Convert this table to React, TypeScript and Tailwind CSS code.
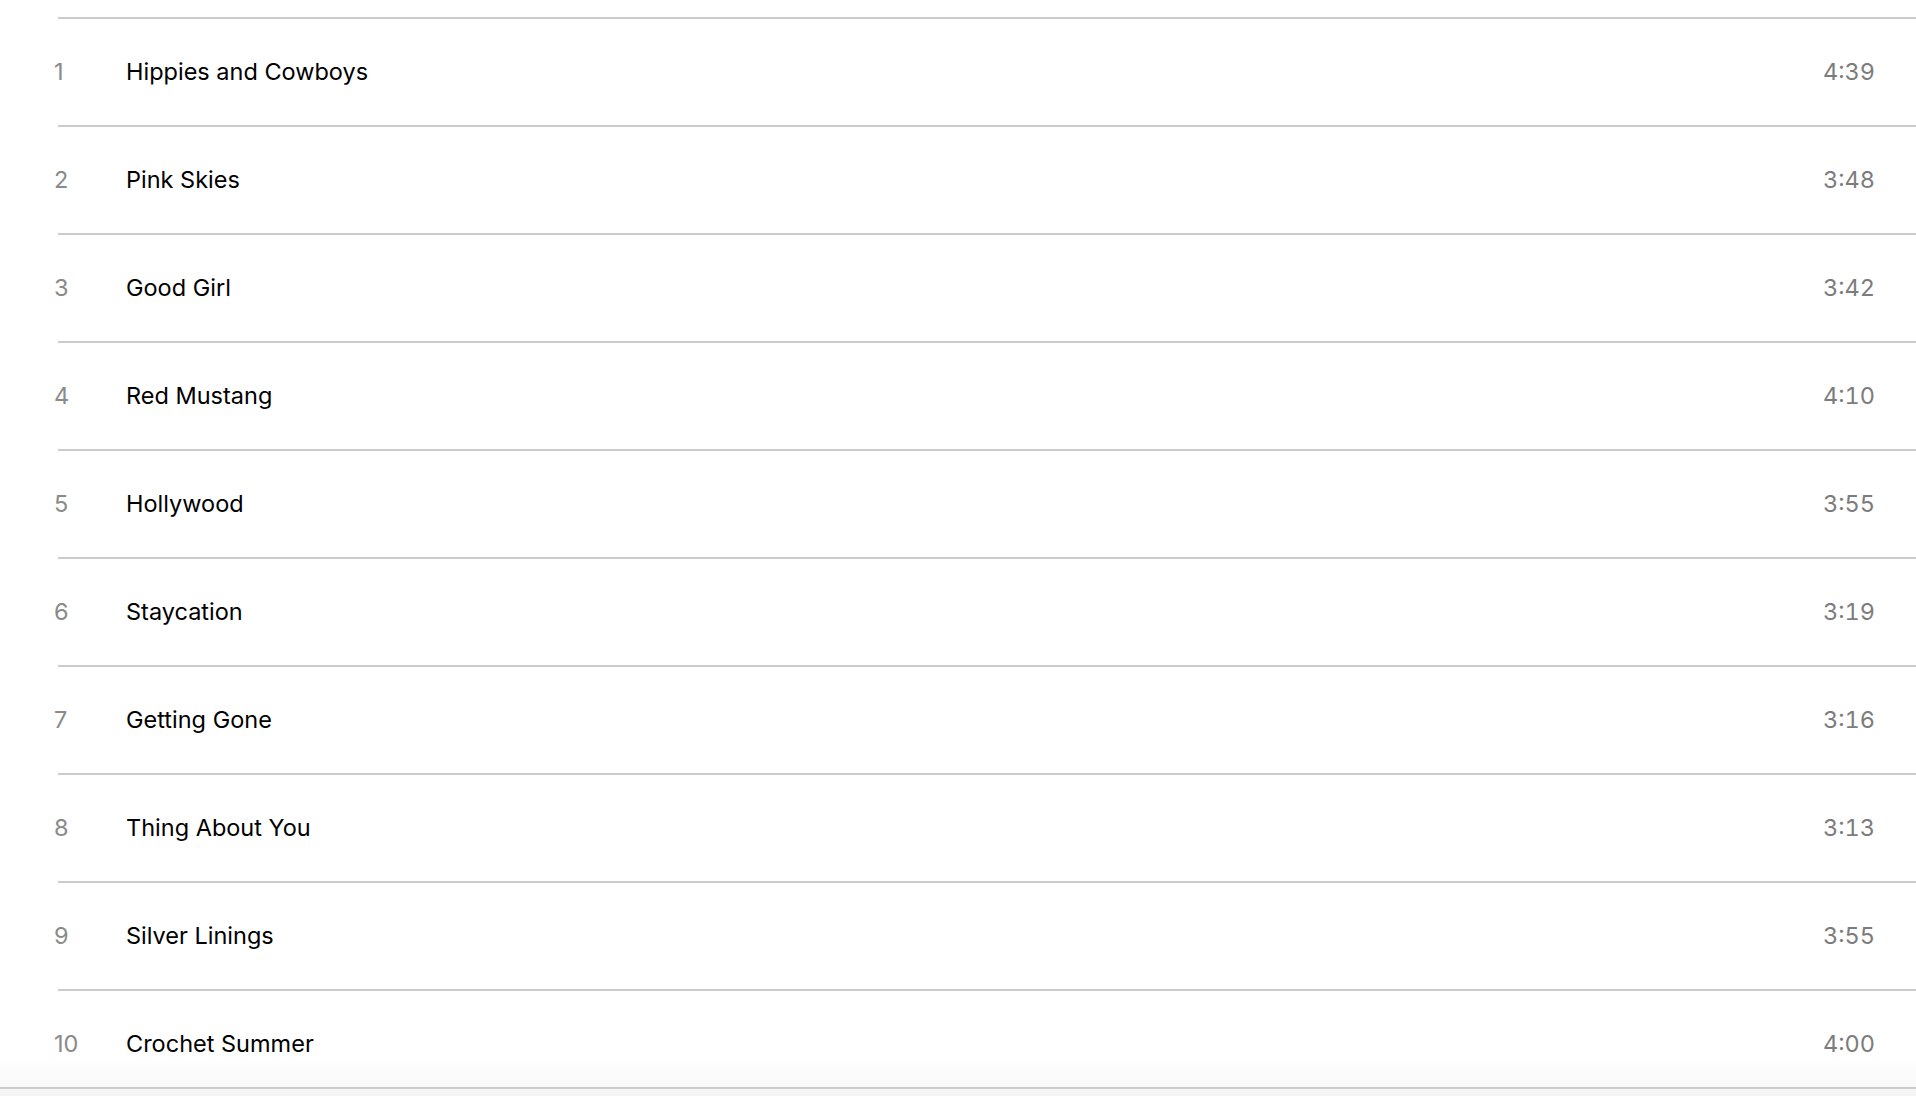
import React from 'react';

const tracks = [
  { n: 1, title: 'Hippies and Cowboys', time: '4:39' },
  { n: 2, title: 'Pink Skies', time: '3:48' },
  { n: 3, title: 'Good Girl', time: '3:42' },
  { n: 4, title: 'Red Mustang', time: '4:10' },
  { n: 5, title: 'Hollywood', time: '3:55' },
  { n: 6, title: 'Staycation', time: '3:19' },
  { n: 7, title: 'Getting Gone', time: '3:16' },
  { n: 8, title: 'Thing About You', time: '3:13' },
  { n: 9, title: 'Silver Linings', time: '3:55' },
  { n: 10, title: 'Crochet Summer', time: '4:00' },
];

const TrackRow = ({ n, title, time }: { n: number; title: string; time: string }) => (
  <div className="flex h-[108px] items-center border-t-2 border-[#cbcbcb] pr-[41px] text-[23.5px]">
    <span className="ml-[-4px] w-[72px] shrink-0 text-[#8a8a8a]">{n}</span>
    <span className="flex-1 text-black">{title}</span>
    <span className="tabular-nums text-[#7c7c7c]">{time}</span>
  </div>
);

export default function App() {
  return (
    <div
      className="relative h-[1096px] overflow-hidden bg-white"
      style={{ fontFamily: 'Inter, "Liberation Sans", sans-serif' }}
    >
      <div className="pl-[58px] pt-[17px]">
        {tracks.map((t) => (
          <TrackRow key={t.n} {...t} />
        ))}
      </div>
      <div className="pointer-events-none absolute bottom-[8px] left-0 right-0 h-[30px] bg-gradient-to-b from-white/0 to-[#f8f8f8]" />
      <div className="absolute bottom-0 left-0 right-0 h-[9px] border-t-2 border-[#cbcbcb] bg-[#f5f5f5]" />
    </div>
  );
}
